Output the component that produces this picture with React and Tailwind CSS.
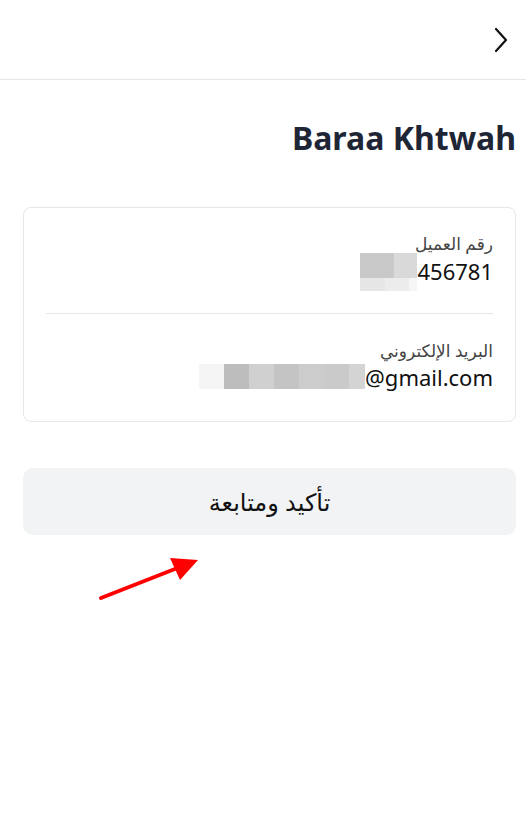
import React from 'react';

function Blur({ cells, size = 25 }) {
    // pixelated redaction blocks
    return (
        <div className="flex flex-col">
            {cells.map((row, i) => (
                <div key={i} className="flex">
                    {row.map((c, j) => (
                        <div key={j} style={{ background: c.color, width: c.w, height: c.h || size }} />
                    ))}
                </div>
            ))}
        </div>
    );
}

export default function App() {
    return (
        <div className="relative w-[526px] h-[823px] bg-white overflow-hidden font-['Noto_Sans','DejaVu_Sans',sans-serif]">
            <div className="h-[80px] border-b border-gray-200 flex items-center justify-end pr-[16px]">
                <svg width="18" height="26" viewBox="0 0 18 26" fill="none" stroke="#111" strokeWidth="2.2" strokeLinecap="round" strokeLinejoin="round">
                    <path d="M4 2 L14 13 L4 24" />
                </svg>
            </div>

            <div className="pl-[23px] pr-[10px]">
                <h1 className="mt-[36px] text-right text-[32px] leading-[44px] font-bold text-[#1e2636]">Baraa Khtwah</h1>

                <div dir="rtl" className="mt-[47px] h-[215px] border border-gray-200 rounded-[8px] px-[22px] pt-[23px]">
                    <div className="text-[17px] leading-[25px] text-[#444]">رقم العميل</div>
                    <div className="flex items-start h-[50px]">
                        <span dir="ltr" className="text-[22px] leading-[30px] text-[#111]">456781</span>
                        <div className="mt-[-3px]">
                            <Blur cells={[
                                [{ color: '#d9d9d9', w: 23, h: 25 }, { color: '#c9c9c9', w: 34, h: 25 }],
                                [{ color: '#f6f6f6', w: 8, h: 13 }, { color: '#ececec', w: 24, h: 13 }, { color: '#e6e6e6', w: 25, h: 13 }],
                            ]} />
                        </div>
                    </div>
                    <div className="border-t border-gray-200 mt-[7px]" />
                    <div className="mt-[24px] text-[17px] leading-[25px] text-[#444]">البريد الإلكتروني</div>
                    <div className="flex items-start mt-[-1px]">
                        <span dir="ltr" className="text-[22px] leading-[30px] text-[#111]">@gmail.com</span>
                        <div className="mt-[2px]">
                            <Blur cells={[[
                                { color: '#d4d4d4', w: 16 },
                                { color: '#cacaca', w: 25 },
                                { color: '#cccccc', w: 25 },
                                { color: '#c4c4c4', w: 25 },
                                { color: '#d0d0d0', w: 25 },
                                { color: '#bdbdbd', w: 25 },
                                { color: '#f5f5f5', w: 25 },
                            ]]} />
                        </div>
                    </div>
                </div>

                <button dir="rtl" className="mt-[46px] w-full h-[67px] rounded-[10px] bg-[#f2f3f5] text-[24px] font-medium text-[#111] flex items-center justify-center">
                    تأكيد ومتابعة
                </button>
            </div>

            <svg className="absolute left-[96px] top-[552px]" width="110" height="52" viewBox="0 0 110 52">
                <line x1="5" y1="46" x2="84" y2="15" stroke="#ff0000" strokeWidth="4" strokeLinecap="round" />
                <polygon points="102,8 74,6 84,28" fill="#ff0000" />
            </svg>
        </div>
    );
}
